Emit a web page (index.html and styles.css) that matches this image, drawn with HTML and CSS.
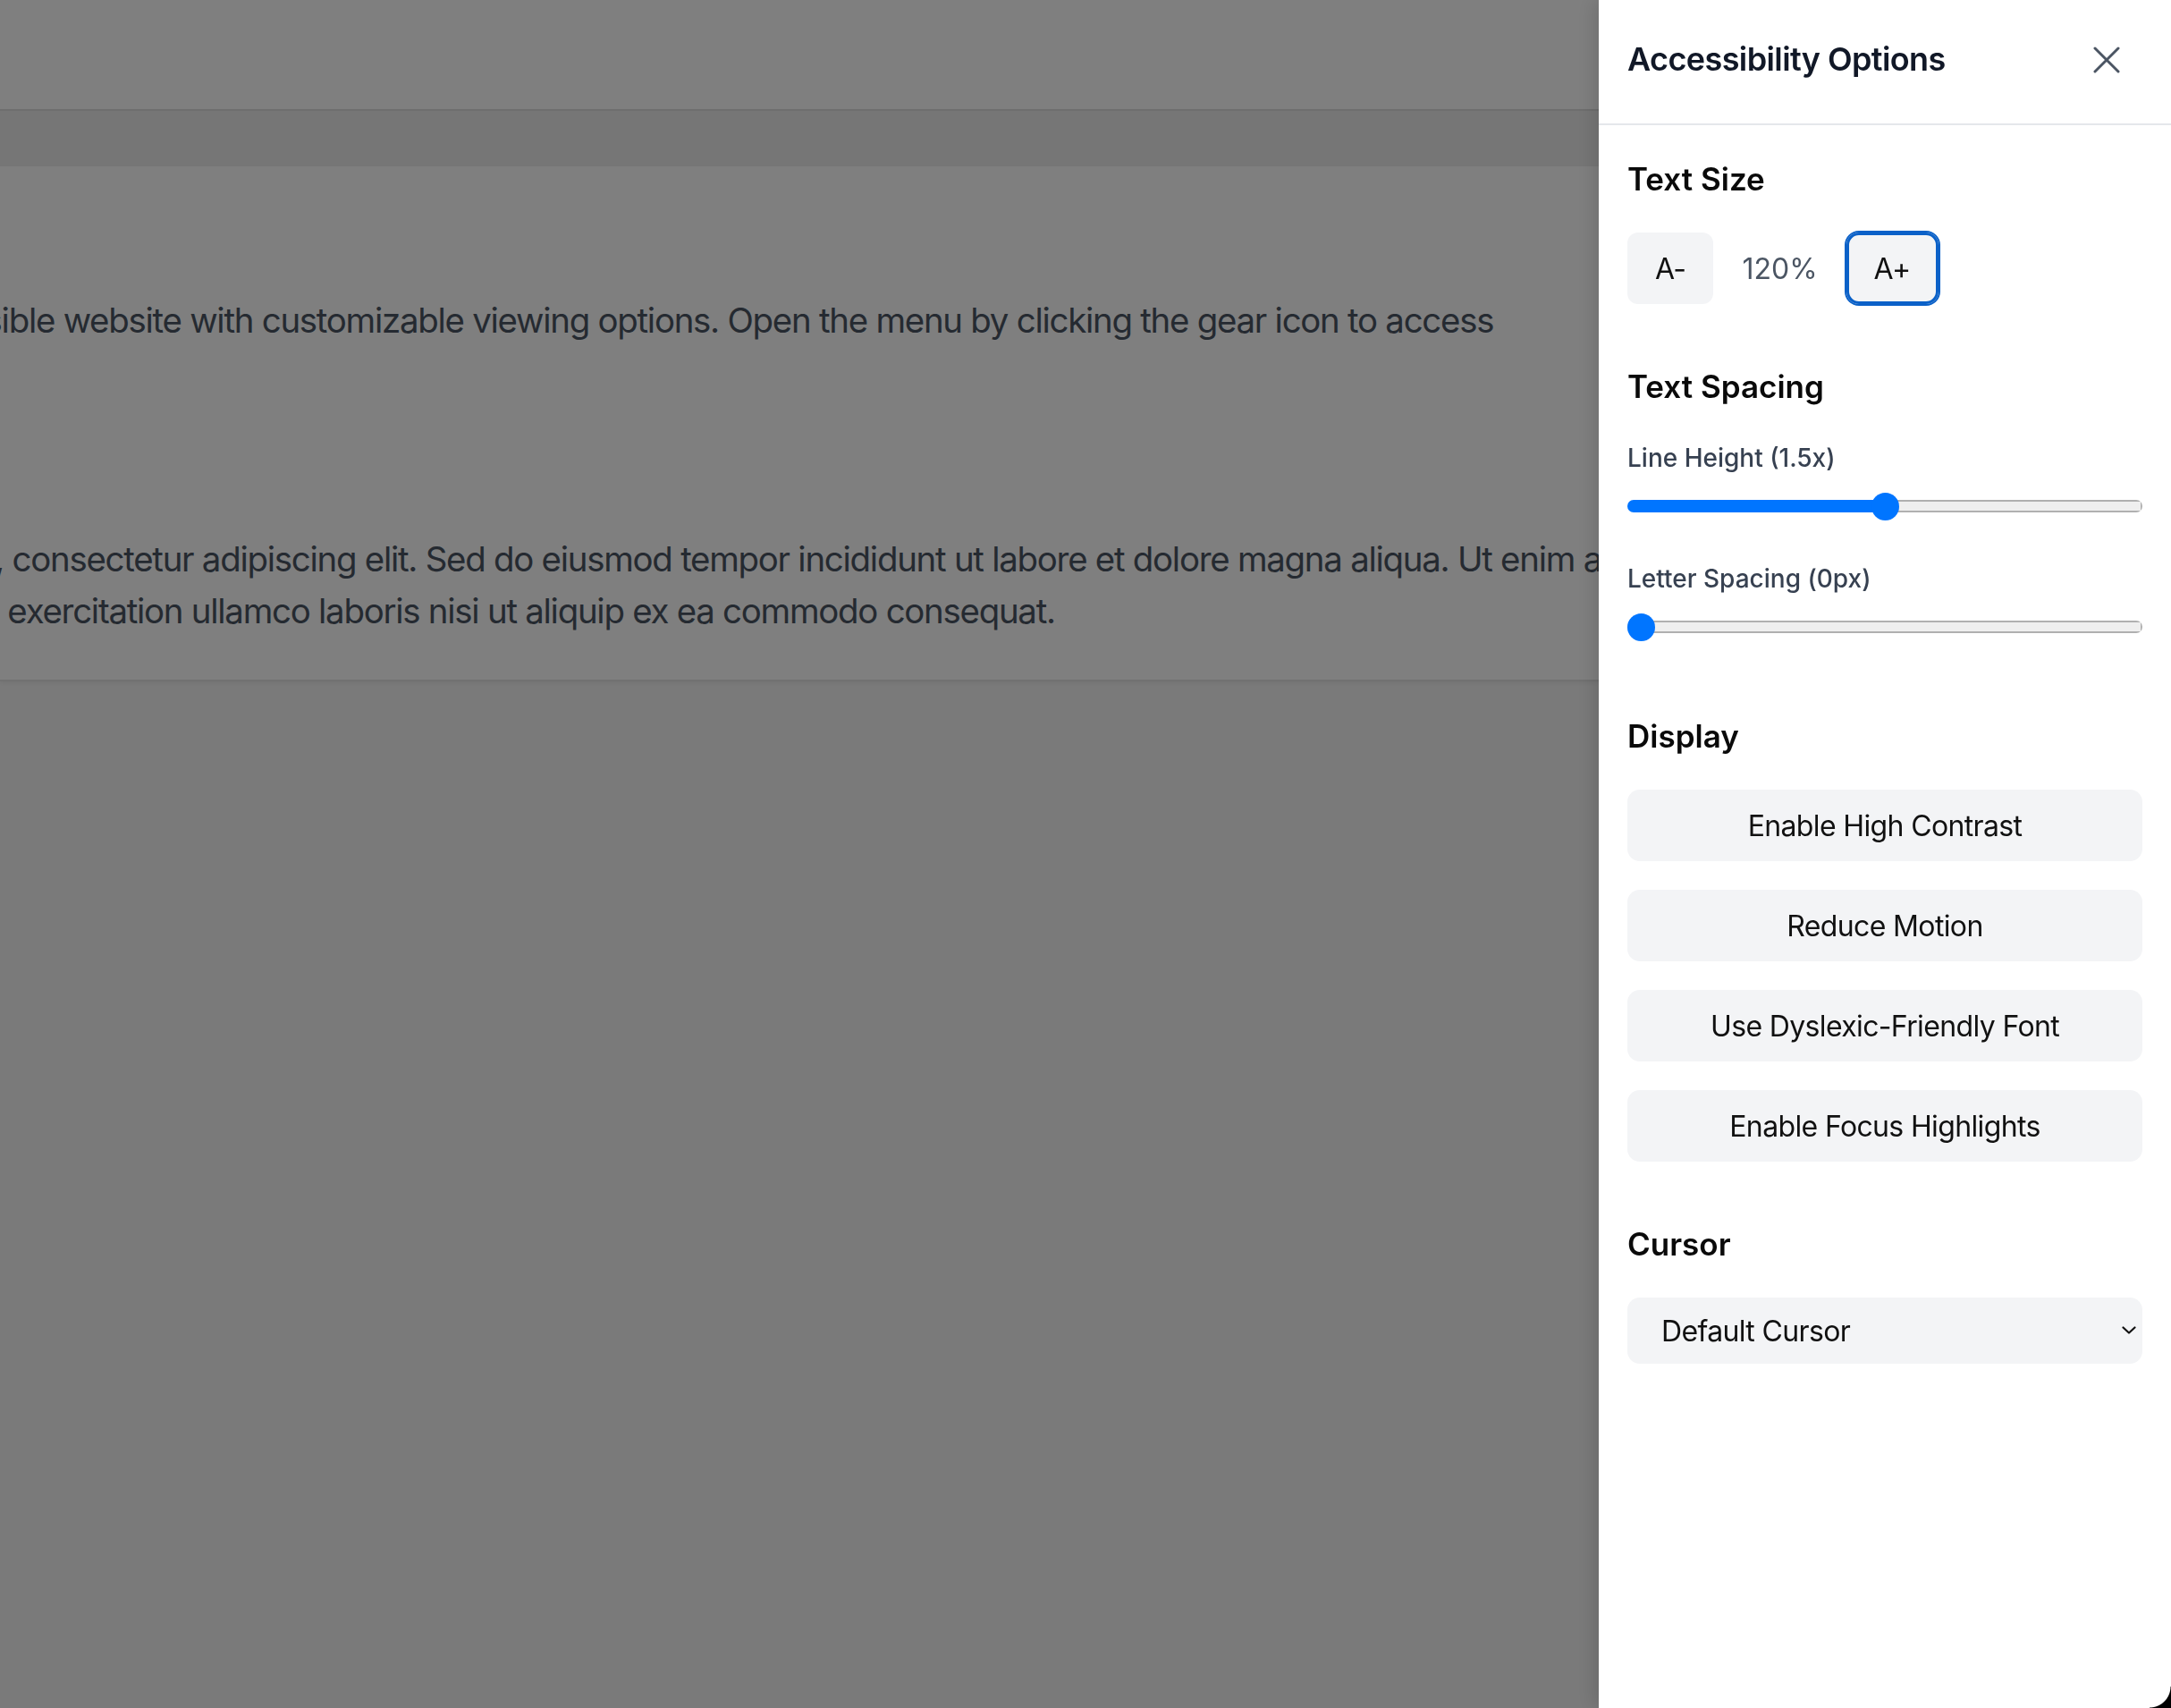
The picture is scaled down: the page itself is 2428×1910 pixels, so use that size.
FILE: index.html
```html
<!DOCTYPE html>
<html lang="en">
<head>
<meta charset="utf-8">
<title>Accessibility Options</title>
<link rel="stylesheet" href="styles.css">
</head>
<body>
<div class="site">
  <header class="topbar"></header>
  <nav class="navband"></nav>
  <main class="card">
    <div class="content">
      <h1 class="page-title">Welcome</h1>
      <p class="text intro">Welcome to a highly accessible website with customizable viewing options. Open the menu by clicking the gear icon to access accessibility features.</p>
      <h2 class="page-sub">Sample Text</h2>
      <p class="text">Lorem ipsum dolor sit amet, consectetur adipiscing elit. Sed do eiusmod tempor incididunt ut labore et dolore magna aliqua. Ut enim ad minim veniam, quis nostrud exercitation ullamco laboris nisi ut aliquip ex ea commodo consequat.</p>
    </div>
  </main>
</div>

<div class="overlay"></div>

<aside class="panel" aria-label="Accessibility Options">
  <div class="panel-header">
    <h2 class="panel-title">Accessibility Options</h2>
    <button class="close-btn" aria-label="Close">
      <svg width="30" height="30" viewBox="0 0 30 30" fill="none" stroke="#4b5563" stroke-width="3" stroke-linecap="round"><path d="M2 2L28 28M28 2L2 28"/></svg>
    </button>
  </div>
  <div class="panel-body">
    <section class="section">
      <h3 class="section-title">Text Size</h3>
      <div class="size-row">
        <button class="size-btn">A-</button>
        <span class="size-value">120%</span>
        <button class="size-btn is-focused">A+</button>
      </div>
    </section>

    <section class="section section-sliders">
      <h3 class="section-title">Text Spacing</h3>
      <div class="field">
        <label class="field-label" for="lh">Line Height (1.5x)</label>
        <input class="range" id="lh" type="range" min="1" max="2" step="0.1" value="1.5" style="--fill: 50%">
      </div>
      <div class="field">
        <label class="field-label" for="ls">Letter Spacing (0px)</label>
        <input class="range" id="ls" type="range" min="0" max="10" step="1" value="0" style="--fill: 0%">
      </div>
    </section>

    <section class="section">
      <h3 class="section-title">Display</h3>
      <div class="option-list">
        <button class="option-btn">Enable High Contrast</button>
        <button class="option-btn">Reduce Motion</button>
        <button class="option-btn">Use Dyslexic-Friendly Font</button>
        <button class="option-btn">Enable Focus Highlights</button>
      </div>
    </section>

    <section class="section">
      <h3 class="section-title">Cursor</h3>
      <div class="select-wrap">
        <select class="select">
          <option>Default Cursor</option>
          <option>Large Cursor</option>
          <option>High Contrast Cursor</option>
        </select>
        <svg class="chevron" width="16" height="9" viewBox="0 0 16 9" fill="none" stroke="#111" stroke-width="2.2" stroke-linecap="round" stroke-linejoin="round"><path d="M1.5 1.5L8 7.5L14.5 1.5"/></svg>
      </div>
    </section>
  </div>
</aside>

<div class="window-corner"></div>
</body>
</html>
```

FILE: styles.css
```css
* {
  box-sizing: border-box;
}

html, body {
  margin: 0;
  padding: 0;
  width: 2428px;
  height: 1910px;
  overflow: hidden;
}

body {
  background: #f4f4f4;
  font-family: Inter, "Noto Sans", "Liberation Sans", sans-serif;
}

/* ---------- underlying page ---------- */
.site {
  display: flex;
  flex-direction: column;
}

.topbar {
  height: 124px;
  background: #ffffff;
  border-bottom: 2px solid #dcdcdc;
}

.navband {
  height: 62px;
  background: #ededed;
}

.card {
  height: 576px;
  background: #fefefe;
  border-bottom: 2px solid #e2e2e2;
  box-shadow: 0 2px 4px rgba(0, 0, 0, 0.05);
  overflow: hidden;
}

.content {
  margin-left: -466px;
  width: 2328px;
  padding-top: 64px;
}

.page-title {
  margin: 0;
  height: 80px;
  font-size: 58px;
  line-height: 80px;
  font-weight: 700;
  color: #111827;
}

.page-sub {
  margin: 48px 0;
  height: 56px;
  font-size: 44px;
  line-height: 56px;
  font-weight: 600;
  color: #111827;
}

.text {
  margin: 0;
  font-size: 38.4px;
  line-height: 57.6px;
  letter-spacing: -1.25px;
  color: #4b5563;
}

.intro {
  margin-left: -6px;
}

.overlay {
  position: fixed;
  inset: 0;
  background: rgba(0, 0, 0, 0.5);
}

/* ---------- panel ---------- */
.panel {
  position: fixed;
  top: 0;
  right: 0;
  bottom: 0;
  width: 640px;
  background: #ffffff;
  box-shadow: -6px 0 20px rgba(0, 0, 0, 0.12);
  display: flex;
  flex-direction: column;
}

.panel-header {
  height: 140px;
  display: flex;
  align-items: center;
  justify-content: space-between;
  padding: 0 57px 4px 32px;
  border-bottom: 2px solid #e5e7eb;
}

.panel-title {
  margin: 0;
  font-size: 36px;
  font-weight: 600;
  letter-spacing: -0.6px;
  color: #111827;
  line-height: 1.2;
}

.close-btn {
  border: 0;
  padding: 0;
  background: none;
  display: flex;
  width: 30px;
  height: 30px;
}

.panel-body {
  padding: 32px;
}

.section {
  margin-bottom: 64px;
}

.section-sliders {
  margin-bottom: 78px;
}

.section-title {
  margin: 0 0 32px;
  font-size: 35px;
  line-height: 56px;
  font-weight: 600;
  color: #0a0a0a;
}

.size-row {
  display: flex;
  align-items: center;
  gap: 32px;
}

.size-btn {
  height: 80px;
  padding: 0 31px;
  border: 0;
  border-radius: 12px;
  background: #f3f4f6;
  font-family: inherit;
  font-size: 32px;
  letter-spacing: -0.64px;
  color: #111111;
}

.size-btn.is-focused {
  border-radius: 14px;
  box-shadow: 0 0 0 2px #0b61c8, inset 0 0 0 3px #0b61c8;
}

.size-value {
  font-size: 32px;
  color: #4b5563;
}

.field + .field {
  margin-top: 45px;
}

.field-label {
  display: block;
  margin-bottom: 18px;
  font-size: 28px;
  line-height: 40px;
  font-weight: 500;
  color: #374151;
}

.range {
  -webkit-appearance: none;
  appearance: none;
  display: block;
  width: 100%;
  height: 32px;
  margin: 0;
  background: transparent;
}

.range::-webkit-slider-runnable-track {
  height: 14px;
  border-radius: 7px;
  background:
    linear-gradient(to right, #0075ff var(--fill), transparent var(--fill)),
    linear-gradient(#efefef, #efefef) center / calc(100% - 4px) 10px no-repeat,
    #b0b0b0;
}

.range::-webkit-slider-thumb {
  -webkit-appearance: none;
  appearance: none;
  width: 31px;
  height: 31px;
  margin-top: -8.5px;
  border-radius: 50%;
  background: #0075ff;
  border: 0;
}

.option-list {
  display: flex;
  flex-direction: column;
  gap: 32px;
}

.option-btn {
  height: 80px;
  width: 100%;
  border: 0;
  border-radius: 14px;
  background: #f3f4f6;
  font-family: inherit;
  font-size: 32px;
  letter-spacing: -0.64px;
  color: #111111;
}

.select-wrap {
  position: relative;
}

.select {
  -webkit-appearance: none;
  appearance: none;
  display: block;
  width: 100%;
  height: 74px;
  padding: 0 60px 0 38px;
  border: 0;
  border-radius: 14px;
  background: #f3f4f6;
  font-family: inherit;
  font-size: 32px;
  letter-spacing: -0.64px;
  color: #111111;
}

.chevron {
  position: absolute;
  right: 7px;
  top: 32px;
  pointer-events: none;
}

.window-corner {
  position: fixed;
  right: 0;
  bottom: 0;
  width: 24px;
  height: 24px;
  background: radial-gradient(circle at 0 0, transparent 23px, #000 24px);
}
```
